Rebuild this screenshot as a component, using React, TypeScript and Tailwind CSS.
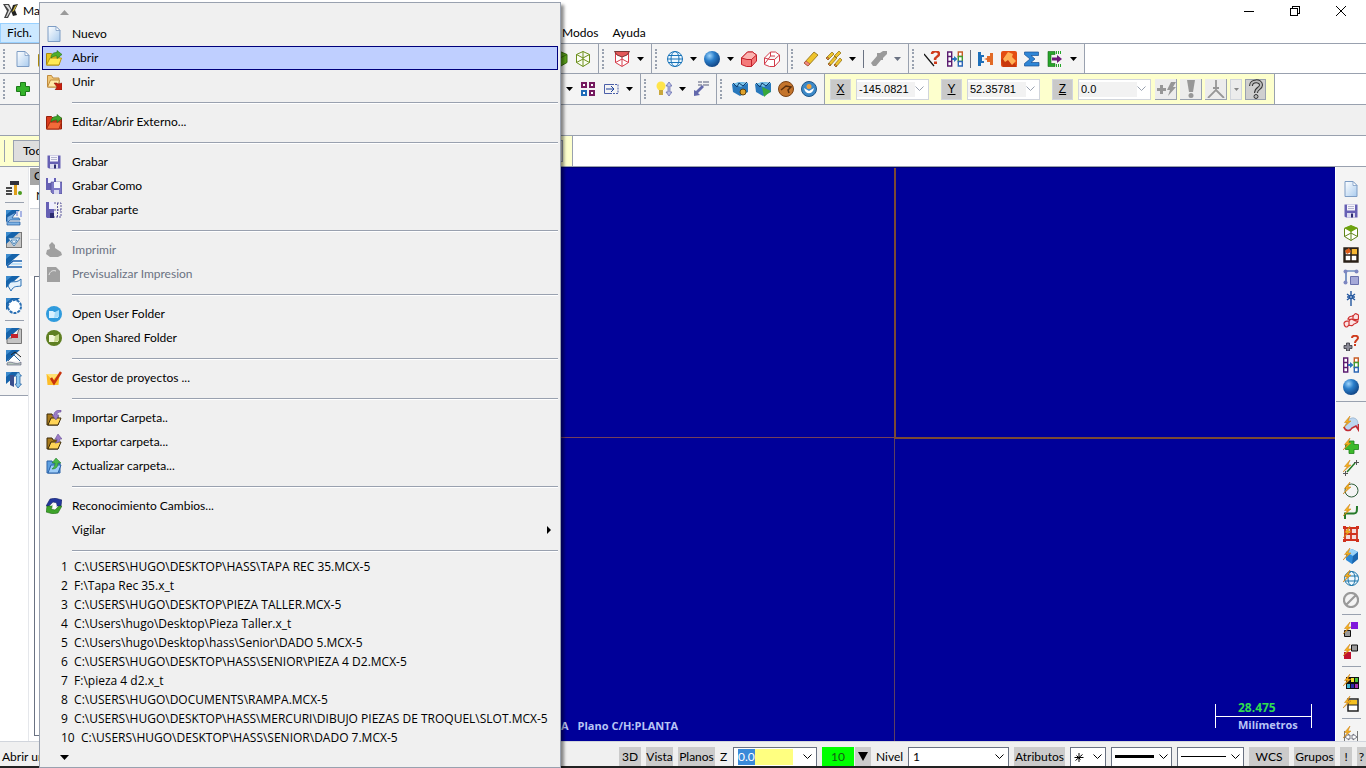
import React from "react";

type IconProps = { name: string; className?: string };

const bolt = <path d="M7 0 1.500 6.500h3L0 12l8-7H5z" fill="#f6b21b" stroke="#c97a10" strokeWidth=".5" />;
const corner = (
  <g>
    <path d="M0 0h14L0 12z" fill="#1563ab" />
    <path d="M0 0h6L0 5z" fill="#3d8bcd" />
  </g>
);

const icons: Record<string, React.ReactNode> = {
  doc: (
    <g>
      <path d="M2 .5h8l4 4v11H2z" fill="url(#page)" stroke="#7d9cc4" />
      <path d="M10 .5v4h4z" fill="#fff" stroke="#7d9cc4" strokeWidth=".8" />
    </g>
  ),
  open: (
    <g>
      <path d="M.5 15V3.500h5L7 5h6v10z" fill="#e8c51f" stroke="#a8870c" />
      <path d="M.5 15 4 8h11.500L13 15z" fill="#ffe955" stroke="#b8960f" />
      <path d="M5 8c0-4 2-5.500 6-5.500V.5l5 4-5 4V6C8 6 7 6.500 5 8z" fill="#4fae2a" stroke="#23701a" strokeWidth=".6" />
    </g>
  ),
  merge: (
    <g>
      <path d="M1.500 13V1.500h4L7 4h6v9z" fill="#f0c878" stroke="#c08a3c" />
      <path d="m1.500 13 3-7h9L12 13z" fill="#ffe9a8" stroke="#c08a3c" />
      <path d="M8 9h3l1 1 4-1v7H9l2-3z" fill="#c8200f" stroke="#7d150a" strokeWidth=".5" />
    </g>
  ),
  external: (
    <g>
      <path d="M.5 15V2.500h5L7 4h8.500v11z" fill="#d93a1c" stroke="#96200c" />
      <path d="M.5 15 4 8h11.500L13 15z" fill="#f26b3a" stroke="#a82b0e" />
      <path d="M5 8c0-4 2-5.500 6-5.500V.5l5 4-5 4V6C8 6 7 6.500 5 8z" fill="#3fa52a" stroke="#1f661a" strokeWidth=".6" />
    </g>
  ),
  save: (
    <g>
      <path d="M1.500 1.500h13v13H3l-1.500-1z" fill="#6660b4" />
      <path d="M4 1.500h8v6H4z" fill="#f4f4fb" />
      <path d="M5 3.500h6M5 5.500h6" stroke="#b6b6d0" />
      <path d="M4 10h8v4.500H4z" fill="#dcdcf0" />
      <path d="M8 10.500h2v4H8z" fill="#2c2c70" />
    </g>
  ),
  saveAs: (
    <g>
      <path d="M0 0h10v12H0z" fill="#6660b4" />
      <path d="M2 0h6v5H2z" fill="#eef" />
      <path d="M5 4h11v12H7l-2-2z" fill="#7d78c6" stroke="#4b468e" strokeWidth=".6" />
      <path d="M8 4h6v6H8z" fill="#f4f4fb" />
      <path d="M8 12h5v4H8z" fill="#dcdcf0" />
    </g>
  ),
  savePart: (
    <g>
      <path d="M0 0h8v16H1l-1-1z" fill="#6660b4" />
      <path d="M3 0h5v7H3z" fill="#eef" />
      <path d="M4 11h4v5H4z" fill="#2c2c70" />
      <path d="M8 1h7v14H8M8 8h7M11.500 1v14" fill="none" stroke="#5a569c" strokeDasharray="2 1" />
    </g>
  ),
  print: <path d="M4 7 3 3l3-3 3 3v3l6 4 1 3-4 2H4l-4-3 1-4z" fill="#a0a0a0" />,
  preview: (
    <g>
      <path d="M1 1h9l4 4v11H1z" fill="#a0a0a0" />
      <path d="M3 9c1-4 4-5 7-4" fill="none" stroke="#e8e8e8" />
    </g>
  ),
  userFolder: (
    <g>
      <circle cx="8" cy="8" r="8" fill="#2f9bdd" />
      <path d="M3 5h4l1 1h4v6H3z" fill="#d8f1ff" />
      <path d="m8 12 1-6 4-2v7z" fill="#a3dbfa" />
    </g>
  ),
  sharedFolder: (
    <g>
      <circle cx="8" cy="8" r="8" fill="#5f7f22" />
      <path d="M3 5h4l1 1h4v6H3z" fill="#f3f7da" />
      <path d="m8 12 1-6 4-2v7z" fill="#c5d68a" />
    </g>
  ),
  project: (
    <g>
      <path d="M.5 4h13l-1 11H1.500z" fill="#fdbd28" />
      <path d="M.5 4h13l-7 6z" fill="#ffe272" />
      <path d="m5 8 3 5 7-11" fill="none" stroke="#c8330d" strokeWidth="2.500" />
    </g>
  ),
  importDir: (
    <g>
      <path d="M1 15V4h5l1 2h5v9z" fill="#a87a1c" stroke="#3c2a08" />
      <path d="m2 15 3-7h10l-3 7z" fill="#ffd456" stroke="#3c2a08" />
      <path d="M15 0c-5 0-7 2-7 5H6l4 5 3-5h-2c0-2 1-3 4-3z" fill="#9b7cc6" stroke="#5c4590" strokeWidth=".5" />
    </g>
  ),
  exportDir: (
    <g>
      <path d="M1 15V4h5l1 2h5v9z" fill="#a87a1c" stroke="#3c2a08" />
      <path d="m2 15 3-7h10l-3 7z" fill="#ffd456" stroke="#3c2a08" />
      <path d="m12 0 4 5h-2c0 3-2 4-5 4 2-1 2-2 2-4H9z" fill="#9b7cc6" stroke="#5c4590" strokeWidth=".5" />
    </g>
  ),
  updateDir: (
    <g>
      <path d="M1 15V3h5l1 2h7v10z" fill="#5d9fe0" stroke="#2a62a8" />
      <path d="m2 15 3-8h10l-3 8z" fill="#9dccf8" stroke="#2a62a8" />
      <path d="m10 0 5 5h-3c0 4-2 6-6 6 2-2 3-3 3-6H6z" fill="#49b84a" stroke="#1f7526" strokeWidth=".5" />
    </g>
  ),
  changes: (
    <g>
      <path d="m0 8 4-7 5-1 7 2-1 6H9l2-3-4-1-4 4z" fill="#23379c" stroke="#101c5c" strokeWidth=".5" />
      <path d="m16 8-4 7-5 1-7-2 1-6h6l-2 3 4 1 4-4z" fill="#3ea32a" stroke="#195c12" strokeWidth=".5" />
      <path d="m6 9 3-4 2 2-2 4z" fill="#fff" />
    </g>
  ),
  plus: <path d="M5.500 1.500h5v4h4v5h-4v4h-5v-4h-4v-5h4z" fill="#34b32a" stroke="#1c7a19" />,
  cubeGreen: (
    <g>
      <path d="m8 .5 7 3v8l-7 4-7-4v-8z" fill="#5fa81e" stroke="#3a6d10" />
      <path d="M1 3.500 8 7l7-3.500M8 7v8.500" fill="none" stroke="#3a6d10" />
    </g>
  ),
  cubeWire: (
    <path d="m8 .5 6.500 3v8L8 15.500l-6.500-4v-8zM1.500 3.500 8 7l6.500-3.500M8 .5v15M1.500 11.500 8 8l6.500 3.500" fill="#fbfdf2" stroke="#6b8f1a" />
  ),
  cubeTop: (
    <g>
      <path d="m8 1 6.500 2.500v8L8 15.500l-6.500-4v-8zM1.500 11.500 8 8l6.500 3.500M8 6v9.500" fill="#fff" stroke="#5f8418" />
      <path d="m8 0 7 3-7 4-7-4z" fill="#6da30f" />
    </g>
  ),
  cubeRedTop: (
    <g>
      <path d="M1.500 2h13v9.500L8 15.500l-6.500-4zM1.500 11.500 8 8l6.500 3.500M8 6v9" fill="#fff" stroke="#d63a48" />
      <path d="M.5.5h15L13 4 8 6 3 4z" fill="#e35a5a" stroke="#5c1a1a" strokeWidth=".8" />
    </g>
  ),
  globe: (
    <g fill="none" stroke="#1873b8">
      <circle cx="8" cy="8" r="7.500" fill="#eef8ff" />
      <ellipse cx="8" cy="8" rx="4" ry="7.500" />
      <path d="M.5 8h15M2 4.500h12M2 11.500h12" />
    </g>
  ),
  sphere: <circle cx="8" cy="8" r="8" fill="url(#ball)" />,
  boxRed: (
    <g stroke="#c3202a">
      <path d="m.5 7 6-6h5l4 3v6l-5 5.500h-5l-5-2z" fill="#f47a7a" />
      <path d="m.5 7 6-6h5l4 3-5 4.500H6z" fill="#fcb3b0" />
      <path d="M10.500 8.500v7" fill="none" />
    </g>
  ),
  boxWire: <path d="m.5 7 6-6h5l4 3v6l-5 5.500h-5l-5-2zM.5 7 6 8.500h4.500l5-4.500M6.500 1v4l-6 8M6.500 5h4.500M10.500 8.500v7" fill="#fff" stroke="#d23c4a" />,
  eraser: (
    <g>
      <path d="m1 12 10-11 4 3L5 15z" fill="#efc42c" stroke="#8a6a10" strokeWidth=".8" />
      <path d="m1 12 2-2 4 3-2 2z" fill="#f08a84" stroke="#a34238" strokeWidth=".6" />
    </g>
  ),
  erasers: (
    <g fill="#efc42c" stroke="#8a6a10" strokeWidth=".7">
      <path d="m0 7 6-6 2 2-6 6zM2 13l7-8 2 2-7 8zM8 14l6-7 2 2-6 7zM8 5l5-5 2 2-5 5z" />
      <path d="m0 7 2-1 1 2-1 1zM2 13l1-1 2 2-1 1zM8 14l1-1 2 2-1 1z" fill="#ee7d75" />
    </g>
  ),
  eraserOff: <path d="m0 12 6-7V2h3l3-2h4v3l-4 4v2h-2l-5 6H2z" fill="#9a9a9a" />,
  analyze: (
    <g>
      <path d="m0 3 10 12" stroke="#111" strokeWidth="1.200" />
      <path d="M8 3c0-3 7-4 7 0 0 3-4 2-4 6" fill="none" stroke="#cf3b1c" strokeWidth="2.500" />
      <path d="M10 10.500h3v2.500h-3z" fill="#cf3b1c" />
    </g>
  ),
  swap: (
    <g fill="#fff" strokeWidth="1.400">
      <path d="M.7 1h4v14h-4zM.7 5.500h4M.7 10.500h4" stroke="#5b1c70" />
      <path d="M11.300 1h4v4.500h-4z" stroke="#c85c25" />
      <path d="M11.300 5.500h4v5h-4z" stroke="#459a30" />
      <path d="M11.300 10.500h4V15h-4z" stroke="#2b65b5" />
      <path d="M5 7h2V5l3.500 3L7 11V9H5z" fill="#2b75c0" />
    </g>
  ),
  plug: (
    <g>
      <path d="M0 1h3v3h3v2H4v4h2v2H3v3H0z" fill="#1d6fba" />
      <path d="M15 2h-3v3H9v2L6 8l3 1v2h3v3h3z" fill="#e26a26" />
    </g>
  ),
  feature: (
    <g>
      <rect width="16" height="16" rx="2" fill="#e44d12" />
      <path d="M0 9 7 2 16 16H2z" fill="#c8380c" />
      <path d="m7 1 5 2-1 3 4 4-4 4-4-5-3 2-2-3z" fill="#ffb055" />
    </g>
  ),
  sigma: <path d="M.5 1h14v3.500H7L11 8l-4 3.500h8V15H.5v-2.500L6 8 .5 3.500z" fill="#2f86d6" stroke="#174f92" strokeWidth=".7" />,
  outbox: (
    <g>
      <path d="M8 .5H1v15h7v-3H4v-9h4z" fill="#27a52a" stroke="#156416" strokeWidth=".6" />
      <path d="M5 6.500h5V4l5 4-5 4V9.500H5z" fill="#6c1878" />
      <path d="M9.500 0v3M11.500 0v3M13.500 0v3M9.500 13v3M11.500 13v3M13.500 13v3" stroke="#27a52a" />
    </g>
  ),
  squares: (
    <g fill="#fff" strokeWidth="2">
      <path d="M2 2h4v4H2zM10 2h4v4h-4zM10 10h4v4h-4z" stroke="#741a5f" />
      <path d="M2 10h4v4H2z" stroke="#1f6cb8" />
    </g>
  ),
  stretch: (
    <g fill="none" stroke="#4a5ea8">
      <path d="M9 3.500H1.500v9H9" />
      <path d="M9 3.500h6v9H9" strokeDasharray="2 1" />
      <path d="M3 8h7M8 5l3 3-3 3" stroke="#1b3f9c" />
    </g>
  ),
  bulb: (
    <g>
      <circle cx="5" cy="5" r="4.500" fill="#ffe44a" />
      <path d="M3 9h4v5H3z" fill="#c9a83c" />
      <path d="m13 1 3 4h-2v6h2l-3 4-3-4h2V5h-2z" fill="#b9bfe6" stroke="#5b63a8" strokeWidth=".7" />
    </g>
  ),
  axisText: (
    <g>
      <path d="M5 1h4M10 1h6M5 4h4M10 4h6" stroke="#555a78" />
      <path d="m11 6-6 6 2 2-6 1 0-6 2 1 6-6z" fill="#6268ac" />
    </g>
  ),
  mcGear: (
    <g>
      <path d="M0 3 8 1l8 1v9l-8 4-7-4z" fill="#2878bc" />
      <path d="M0 3 8 1l8 1-7 4z" fill="#79c3ea" />
      <path d="m1 2 4 4 2-4 4 3 4-4" stroke="#0f3a6c" fill="none" />
      <circle cx="11" cy="11" r="3" fill="#e0a32c" stroke="#5c4110" />
    </g>
  ),
  mcRun: (
    <g>
      <path d="M0 3 8 1l8 1v9l-8 4-7-4z" fill="#2878bc" />
      <path d="M0 3 8 1l8 1-7 4z" fill="#79c3ea" />
      <path d="m1 2 4 4 2-4 4 3 4-4" stroke="#0f3a6c" fill="none" />
      <path d="m7 6 9 4-7 6z" fill="#38a83a" />
    </g>
  ),
  brownBall: (
    <g>
      <circle cx="8" cy="8" r="7.500" fill="#c4742b" stroke="#7b4315" />
      <path d="m3 9 5-4 5 1-3 3 1 3" fill="none" stroke="#5a2f0d" strokeWidth="1.500" />
    </g>
  ),
  blueBall: (
    <g>
      <circle cx="8" cy="8" r="7.500" fill="#3b89c8" stroke="#1d5588" />
      <path d="M3 7c1 7 9 7 10 0l-5 3z" fill="#fff" />
      <circle cx="8" cy="5.500" r="2.500" fill="#f0a03c" />
    </g>
  ),
  hammer: (
    <g>
      <path d="M4 1h9v4H4z" fill="#30303c" />
      <path d="M8 5h3v10H8z" fill="#e0a01c" />
      <path d="M0 8h6M0 11h6M0 14h6" stroke="#111" strokeWidth="1.300" />
      <circle cx="14" cy="13" r="2" fill="#4a9a20" />
    </g>
  ),
  opContour: (
    <g>
      {corner}
      <path d="M10 1h2v5h-2zM14 1h2v6h-2z" fill="#a8b4e4" />
      <path d="m1 7 9-5-4 6h7l1 2H4l-2 2h12v3H1z" fill="#7fb4e6" stroke="#1b5399" strokeWidth=".7" />
    </g>
  ),
  opPocket: (
    <g>
      <rect x=".5" y=".5" width="15" height="15" fill="#c6c6c6" stroke="#777" />
      {corner}
      <path d="M2 6h12l-6 8zM5 8h6l-3 4z" fill="#e8f3fc" stroke="#2c6eaa" strokeWidth=".8" />
    </g>
  ),
  opFace: (
    <g>
      {corner}
      <path d="m6 7 4-3h6v5H5z" fill="#f4f8fc" />
      <path d="M1 12 7 7h9M1 13h15" stroke="#1b62ae" strokeWidth="1.600" fill="none" />
      <path d="M6 9h10v2H4z" fill="#bfe0f7" />
    </g>
  ),
  opSurf: (
    <g>
      {corner}
      <path d="M2 10c3-8 7-1 13-7v7c-4 1-7-1-10 5z" fill="#e4f1fb" stroke="#2b70b4" />
    </g>
  ),
  opCircle: (
    <g>
      {corner}
      <circle cx="8.500" cy="8.500" r="6.500" fill="#fff" stroke="#2b70b4" strokeWidth="2" strokeDasharray="3 1" />
    </g>
  ),
  opBlock: (
    <g>
      <path d="M1 10h5V7h5l2-6h2.500v14.500H1z" fill="#c4c4c4" stroke="#777" />
      {corner}
      <path d="M5 6h7v4H5z" fill="#c4232c" />
    </g>
  ),
  opMulti: (
    <g>
      {corner}
      <path d="m5 5 4-3 6 5" fill="none" stroke="#222" />
      <path d="m2 11 6-6 6 6" fill="#fff" stroke="#33689b" />
      <path d="M1 13c4-3 9 3 14-1v3H1z" fill="#b9c9bd" stroke="#557" strokeWidth=".6" />
    </g>
  ),
  opDrill: (
    <g>
      {corner}
      <path d="M4 3h4v12l-4-2z" fill="#394f8e" />
      <path d="m12 0 3.500 4H14v8h1.500L12 16l-3-4h1.500V4H9z" fill="#8cc6ee" stroke="#1b5c9f" strokeWidth=".7" />
    </g>
  ),
  gridBolt: (
    <g>
      <path d="M1.500 1.500h13v13h-13z" fill="#fff" stroke="#2a2118" strokeWidth="2.400" />
      <path d="M8 2h6v6H8z" fill="#f5b733" />
      <path d="M8 1v14M1 8h14" stroke="#2a2118" strokeWidth="1.500" />
      <path d="m2 4 4-3 2 4-4 2z" fill="#de5b15" />
    </g>
  ),
  nodes: (
    <g>
      <path d="M3 14V2h11" fill="none" stroke="#2d5aa6" strokeWidth="1.200" />
      <circle cx="2.500" cy="2.500" r="2" fill="#7c86c0" />
      <circle cx="13.500" cy="2.500" r="2" fill="#7c86c0" />
      <circle cx="2.500" cy="13.500" r="2" fill="#7c86c0" />
      <path d="M7.500 7.500h8v8h-8z" fill="#a5a9d8" stroke="#6a70ac" />
    </g>
  ),
  star: (
    <g fill="none" stroke="#23579f" strokeWidth="1.400">
      <path d="M8 0v15M4 3l8 6M12 3 4 9M4 6h8" />
      <circle cx="8" cy="6" r="1.500" fill="#fff" />
    </g>
  ),
  ribbon: (
    <g fill="#fbe3e3" stroke="#cf3030" strokeWidth="1.200">
      <path d="M5 6c2-5 4-1 6-4s3 0 4.500 0v4c-2 2-4-1-6 1z" />
      <path d="M1 10c2-4 4 0 6-3s4 2 8 1c0 3-4 2-5 4s-4-1-5 1-4 1-4-3z" />
      <path d="M6 8v4M10 2v5" fill="none" />
    </g>
  ),
  plusAsk: (
    <g>
      <path d="M3.500 8h3v2.500H9v3H6.500V16h-3v-2.500H1v-3h2.500z" fill="#8a8a96" stroke="#33333c" strokeWidth=".8" />
      <path d="M9 3c0-3 6-3 6 0 0 2-3 2-3 5" fill="none" stroke="#cf3b1c" strokeWidth="2" />
      <path d="M11 9h2v2h-2z" fill="#cf3b1c" />
    </g>
  ),
  boltSurf: (
    <g>
      <path d="M1 12c2-1 2-8 5-9s4-2 7 0c2 1 2 5 2.500 9l-3-2-3 1c-2 4-6 4-8.500 1z" fill="#bcd6f0" stroke="#8aa4c0" strokeWidth=".6" />
      <path d="M1 11c1 4 6 5 8 1l4-2 2.500 4V8" fill="none" stroke="#c22a34" strokeWidth="1.600" />
      {bolt}
    </g>
  ),
  boltPlus: (
    <g>
      <path d="M6 3h5v3.500h4.500v5H11v4H6v-4H2.500v-5H6z" fill="#3cba2a" stroke="#1f8019" strokeWidth=".8" />
      {bolt}
    </g>
  ),
  boltLine: (
    <g>
      <path d="m4 12 8-9" stroke="#237a26" strokeWidth="1.500" />
      <path d="M11 2.500h5M13.500 0v5M0 13.500h5M2.500 11v5" stroke="#555" />
      {bolt}
    </g>
  ),
  boltCircle: (
    <g>
      <circle cx="8.500" cy="8.500" r="6.500" fill="none" stroke="#2e5d38" />
      {bolt}
    </g>
  ),
  boltCurve: (
    <g>
      <path d="M2 15V9.500h9c3 0 3-2 3-7.500" fill="none" stroke="#257a2a" strokeWidth="2" />
      {bolt}
    </g>
  ),
  boltGrid: (
    <g>
      <path d="M2 2h12v12H2zM8 2v12M2 8h12" fill="#f3dcdc" stroke="#d0301d" strokeWidth="1.800" />
      <path d="M0 0h3v3H0zM13 0h3v3h-3zM0 13h3v3H0zM13 13h3v3h-3z" fill="#d0301d" />
      {bolt}
    </g>
  ),
  boltCube: (
    <g>
      <path d="m9 1 6 3v7l-6 5-6-4V4z" fill="#2f8bd8" />
      <path d="m9 1 6 3-5 4-7-4z" fill="#9ad2f7" />
      <path d="m10 8 5-4v7l-6 5z" fill="#1c66ae" />
      {bolt}
    </g>
  ),
  boltGlobe: (
    <g>
      <g fill="none" stroke="#1873a8">
        <circle cx="8.500" cy="8.500" r="7" fill="#eef8ff" />
        <ellipse cx="8.500" cy="8.500" rx="3.500" ry="7" />
        <path d="M2 6h13M2 11h13" />
      </g>
      {bolt}
    </g>
  ),
  none: <path d="M13 3A7 7 0 1 0 3 13 7 7 0 0 0 13 3L3 13" fill="none" stroke="#9a9a9a" strokeWidth="2.200" />,
  boltPurple: (
    <g>
      <path d="M8 0h7v7H8z" fill="#8118dc" />
      <path d="M1.500 8.500h6v6h-6z" fill="#9a9a9a" stroke="#111" />
      {bolt}
    </g>
  ),
  boltRed: (
    <g>
      <path d="M8.500 1h6v6h-6z" fill="#9a9a9a" stroke="#111" />
      <path d="M1 8h7v7H1z" fill="#c0102f" />
      {bolt}
    </g>
  ),
  boltColors: (
    <g>
      <path d="M3 3h13v12H3z" fill="#111" />
      <path d="M8 4h3v4H8z" fill="#f2e22c" />
      <path d="M12 4h3v4h-3z" fill="#4bc43a" />
      <path d="M4 10h3v4H4z" fill="#3fb7d4" />
      <path d="M8 10h3v4H8z" fill="#2c2ca8" />
      <path d="M12 10h3v4h-3z" fill="#a834b0" />
      {bolt}
    </g>
  ),
  boltBoard: (
    <g>
      <path d="M5 3h10v12H5z" fill="#fff" stroke="#222" strokeWidth="1.500" />
      <path d="M6 4h8v5H6z" fill="#f4c021" />
      <path d="M5 9h10" stroke="#222" />
      {bolt}
    </g>
  ),
  boltDim: (
    <g>
      <path d="M1.500 5v11M14.500 5v11" stroke="#777" />
      <path d="m2 11 4-3v2h4V8l4 3-4 3v-2H6v2z" fill="#fff" stroke="#556" strokeWidth=".8" />
      {bolt}
    </g>
  ),
};

const Icon = ({ name, className = "" }: IconProps) => (
  <svg viewBox="0 0 16 16" className={`size-4 shrink-0 ${className}`} aria-hidden="true">
    {icons[name]}
  </svg>
);

const Tool = ({ name }: { name: string }) => (
  <button type="button" aria-label={name} className="shrink-0">
    <Icon name={name} />
  </button>
);

const Arrow = ({ off = false }: { off?: boolean }) => (
  <svg viewBox="0 0 7 4" className={`h-1 w-[7px] shrink-0 ${off ? "text-gray-500" : "text-black"}`} aria-hidden="true">
    <path d="M0 0h7L3.500 4z" fill="currentColor" />
  </svg>
);

const Chevron = () => (
  <svg viewBox="0 0 9 6" className="pointer-events-none h-[6px] w-[9px] shrink-0" aria-hidden="true">
    <path d="m.5.5 4 4 4-4" fill="none" stroke="currentColor" />
  </svg>
);

const Grip = () => <span className="h-5 w-[5px] shrink-0 border-l-2 border-dotted border-gray-400" />;

const Divider = () => <span className="h-[18px] w-px shrink-0 bg-gray-500" />;

// "v" is a drop-down arrow, "-" an inactive one and "|" a divider
const Tools = ({ items }: { items: string[] }) => (
  <>
    {items.map((item, i) => {
      if (item === "v" || item === "-") return <Arrow key={i} off={item === "-"} />;
      if (item === "|") return <Divider key={i} />;
      return <Tool key={i} name={item} />;
    })}
  </>
);

const Group = ({ items }: { items: string[] }) => (
  <div className="flex shrink-0 items-center gap-[7px] border-r border-gray-400 bg-[#f4f4f4] pr-[7px] pl-[3px]">
    <Grip />
    <Tools items={items} />
  </div>
);

const LeadGroup = ({ first, last, width }: { first: string[]; last: string[]; width: string }) => (
  <div className={`flex shrink-0 items-center gap-[7px] border-r border-gray-400 bg-[#f4f4f4] pr-[7px] pl-[3px] ${width}`}>
    <Grip />
    <Tools items={first} />
    <span className="flex-1" />
    <Tools items={last} />
  </div>
);

const Coordinate = ({ axis, value }: { axis: string; value: string }) => (
  <div className="flex shrink-0 items-center gap-[5px] font-['Liberation_Sans',sans-serif]">
    <label htmlFor={`axis-${axis}`} className="flex h-[21px] w-[21px] items-center justify-center border border-gray-300 bg-[#c9c9c9] text-xs underline">
      {axis}
    </label>
    <div className="flex h-[21px] w-[73px] items-center border border-gray-300 bg-white pr-1 text-gray-400">
      <input id={`axis-${axis}`} defaultValue={value} className="h-[15px] w-full min-w-0 bg-[#f2f2f2] pl-[2px] text-[11px] text-black" />
      <Chevron />
    </div>
  </div>
);

type Entry = { label: string; icon?: string; active?: boolean; disabled?: boolean; sub?: boolean };

const fileMenu: Entry[][] = [
  [{ label: "Nuevo", icon: "doc" }, { label: "Abrir", icon: "open", active: true }, { label: "Unir", icon: "merge" }],
  [{ label: "Editar/Abrir Externo...", icon: "external" }],
  [{ label: "Grabar", icon: "save" }, { label: "Grabar Como", icon: "saveAs" }, { label: "Grabar parte", icon: "savePart" }],
  [{ label: "Imprimir", icon: "print", disabled: true }, { label: "Previsualizar Impresion", icon: "preview", disabled: true }],
  [{ label: "Open User Folder", icon: "userFolder" }, { label: "Open Shared Folder", icon: "sharedFolder" }],
  [{ label: "Gestor de proyectos ...", icon: "project" }],
  [
    { label: "Importar Carpeta..", icon: "importDir" },
    { label: "Exportar carpeta...", icon: "exportDir" },
    { label: "Actualizar carpeta...", icon: "updateDir" },
  ],
  [{ label: "Reconocimiento Cambios...", icon: "changes" }, { label: "Vigilar", sub: true }],
];

const recentFiles = [
  "C:\\USERS\\HUGO\\DESKTOP\\HASS\\TAPA REC 35.MCX-5",
  "F:\\Tapa Rec 35.x_t",
  "C:\\USERS\\HUGO\\DESKTOP\\PIEZA TALLER.MCX-5",
  "C:\\Users\\hugo\\Desktop\\Pieza Taller.x_t",
  "C:\\Users\\hugo\\Desktop\\hass\\Senior\\DADO 5.MCX-5",
  "C:\\USERS\\HUGO\\DESKTOP\\HASS\\SENIOR\\PIEZA 4 D2.MCX-5",
  "F:\\pieza 4 d2.x_t",
  "C:\\USERS\\HUGO\\DOCUMENTS\\RAMPA.MCX-5",
  "C:\\USERS\\HUGO\\DESKTOP\\HASS\\MERCURI\\DIBUJO PIEZAS DE TROQUEL\\SLOT.MCX-5",
  "C:\\USERS\\HUGO\\DESKTOP\\HASS\\SENIOR\\DADO 7.MCX-5",
];

const FileMenu = () => (
  <div className="absolute top-[2px] bottom-0 left-[39px] z-10 w-[522px] border border-gray-400 bg-[#f0f0f0] px-[2px] shadow-[3px_3px_3px_rgba(0,0,0,0.45)]">
    <div className="flex h-[19px] items-center pl-[18px]">
      <svg viewBox="0 0 9 5" className="h-[5px] w-[9px]" aria-hidden="true">
        <path d="M0 5h9L4.500 0z" fill="#9a9a9a" />
      </svg>
    </div>
    {fileMenu.map((section) => (
      <div key={section[0].label}>
        {section.map((entry) => (
          <button
            key={entry.label}
            type="button"
            disabled={entry.disabled}
            className={`flex h-6 w-full items-center border pl-[3px] text-left ${
              entry.active ? "border-[#00007c] bg-[#bfcfff]" : "border-transparent"
            } ${entry.disabled ? "text-gray-500" : ""}`}
          >
            {entry.icon ? <Icon name={entry.icon} /> : <span className="w-4" />}
            <span className="ml-[10px] flex-1">{entry.label}</span>
            {entry.sub && (
              <svg viewBox="0 0 4 8" className="mr-[6px] h-2 w-1" aria-hidden="true">
                <path d="M0 0v8l4-4z" fill="#000" />
              </svg>
            )}
          </button>
        ))}
        <div className="h-4 pt-2 pl-[30px]">
          <div className="h-[2px] border-t border-gray-400 bg-white" />
        </div>
      </div>
    ))}
    <div className="-mt-px font-['Open_Sans','Noto_Sans',sans-serif]">
      {recentFiles.map((file, i) => (
        <button key={file} type="button" className="block h-[19px] w-full pl-[19px] text-left leading-4 whitespace-pre">
          {`${i + 1}  ${file}`}
        </button>
      ))}
    </div>
    <div className="flex h-5 items-center pl-[18px]">
      <svg viewBox="0 0 9 5" className="h-[5px] w-[9px]" aria-hidden="true">
        <path d="M0 0h9L4.500 5z" fill="#000" />
      </svg>
    </div>
  </div>
);

const SideTools = ({ items }: { items: string[] }) => (
  <>
    {items.map((item, i) =>
      item === "|" ? (
        <span key={i} className="mb-px h-px w-[19px] shrink-0 bg-gray-400" />
      ) : (
        <Tool key={i} name={item} />
      )
    )}
  </>
);

const StatusButton = ({ children, className = "" }: { children: React.ReactNode; className?: string }) => (
  <button type="button" className={`h-[19px] shrink-0 bg-[#cbcbcb] text-center ${className}`}>
    {children}
  </button>
);

const StyleSelect = ({ label, width, children }: { label: string; width: string; children: React.ReactNode }) => (
  <div className={`relative flex h-5 shrink-0 items-center justify-between border border-gray-500 bg-white px-[3px] ${width}`}>
    <select aria-label={label} className="absolute inset-0 appearance-none" />
    <span className="pointer-events-none relative">{children}</span>
    <Chevron />
  </div>
);

const App = () => {
  return (
    <div className="relative flex h-screen flex-col overflow-hidden bg-white font-['Lato','Open_Sans',sans-serif] text-xs text-black select-none">
      <svg className="absolute size-0" aria-hidden="true">
        <defs>
          <linearGradient id="page" x1="0" y1="0" x2="1" y2="1">
            <stop offset="0" stopColor="#fff" />
            <stop offset="1" stopColor="#a9cbee" />
          </linearGradient>
          <radialGradient id="ball" cx=".35" cy=".3" r=".8">
            <stop offset="0" stopColor="#9ed4fb" />
            <stop offset=".4" stopColor="#2b7fcb" />
            <stop offset="1" stopColor="#0b3a78" />
          </radialGradient>
        </defs>
      </svg>

      <header className="flex h-[22px] shrink-0 items-center">
        <svg viewBox="0 0 16 16" className="ml-[3px] size-4" aria-hidden="true">
          <path d="M0 1h6l3 6-4 8H1l3-7z" fill="#444" />
          <path d="M2 2h3l3 5-4 7H3l3-7z" fill="#ddd" />
          <path d="m10 2 5-1-3 6 2 5-4 1-2-5z" fill="#222" />
          <path d="m9 9 3-6 2-1-3 6z" fill="#c9b43e" />
        </svg>
        <h1 className="ml-1 flex-1">Mastercam</h1>
        <div className="flex h-full pr-[2px]">
          <button type="button" aria-label="Minimizar" className="flex w-[46px] items-center justify-center">
            <span className="h-px w-[10px] bg-black" />
          </button>
          <button type="button" aria-label="Restaurar" className="flex w-[46px] items-center justify-center">
            <svg viewBox="0 0 10 10" className="size-[10px]" shapeRendering="crispEdges" aria-hidden="true">
              <path d="M.5 2.500h7v7h-7zM2.500 2.500v-2h7v7h-2" fill="none" stroke="#000" />
            </svg>
          </button>
          <button type="button" aria-label="Cerrar" className="flex w-[46px] items-center justify-center">
            <svg viewBox="0 0 10 10" className="size-[10px]" aria-hidden="true">
              <path d="m0 0 10 10M10 0 0 10" fill="none" stroke="#000" />
            </svg>
          </button>
        </div>
      </header>

      <nav className="flex h-[22px] shrink-0 items-center border-b border-gray-400">
        <div className="h-5 w-[562px]">
          <button type="button" className="h-5 w-[40px] border border-[#99d1ff] bg-[#cce8ff] pl-[6px] text-left">Fich.</button>
        </div>
        <div className="flex gap-[14px]">
          <button type="button">Modos</button>
          <button type="button">Ayuda</button>
        </div>
      </nav>

      <div className="flex h-[30px] shrink-0 border-b border-gray-400">
        <LeadGroup width="w-[599px]" first={["doc", "open"]} last={["cubeGreen", "cubeWire"]} />
        <Group items={["cubeRedTop", "v"]} />
        <Group items={["globe", "v", "sphere", "v", "boxRed", "boxWire"]} />
        <Group items={["eraser", "erasers", "v", "|", "eraserOff", "-"]} />
        <Group items={["analyze", "swap", "|", "plug", "feature", "sigma", "outbox", "v"]} />
      </div>

      <div className="flex h-[31px] shrink-0 border-b border-gray-400">
        <LeadGroup width="w-[641px]" first={["plus"]} last={["v", "squares", "stretch", "v"]} />
        <Group items={["bulb", "v", "axisText"]} />
        <Group items={["mcGear", "mcRun", "brownBall", "blueBall"]} />
        <div className="flex items-center border-r border-gray-400 bg-[#fdffcd] pr-2 pl-[5px]">
          <div className="flex gap-3">
            <Coordinate axis="X" value="-145.0821" />
            <Coordinate axis="Y" value="52.35781" />
            <Coordinate axis="Z" value="0.0" />
          </div>
          <div className="ml-1 flex gap-[3px]">
            <button type="button" aria-label="Punto rapido" className="flex h-[21px] w-[22px] items-center justify-center border-r border-b border-gray-400 bg-[#ececec]">
              <svg viewBox="0 0 20 16" className="h-4 w-5" aria-hidden="true">
                <path d="M4 4h3v3h3v3H7v3H4v-3H1V7h3zM15 1h5l-3 5h3l-8 9 2-6h-3z" fill="#979797" />
              </svg>
            </button>
            <button type="button" aria-label="Aviso" className="flex h-[21px] w-[22px] items-center justify-center border-r border-b border-gray-400 bg-[#ececec]">
              <svg viewBox="0 0 8 18" className="h-[18px] w-2" aria-hidden="true">
                <path d="M0 0h8L6 12H2z" fill="#979797" />
                <circle cx="4" cy="15.500" r="2.500" fill="#979797" />
              </svg>
            </button>
            <button type="button" aria-label="Ejes" className="flex h-[21px] w-[22px] items-center justify-center border-r border-b border-gray-400 bg-[#ececec]">
              <svg viewBox="0 0 18 18" className="size-[18px]" aria-hidden="true">
                <path d="M9 0v10L1 18M9 10l8 8M6 8h6" fill="none" stroke="#979797" strokeWidth="1.800" />
              </svg>
            </button>
            <button type="button" aria-label="Mas ejes" className="flex h-[21px] w-3 items-center justify-center border border-gray-300 bg-[#ececec]">
              <svg viewBox="0 0 5 3" className="h-[3px] w-[5px]" aria-hidden="true">
                <path d="M0 0h5L2.500 3z" fill="#888" />
              </svg>
            </button>
            <button type="button" aria-label="Ayuda" className="flex h-[21px] w-[21px] items-center justify-center border border-gray-400 bg-[#cfcfcf]">
              <svg viewBox="0 0 16 20" className="h-5 w-4" aria-hidden="true">
                <path d="M3 7c0-6 10-6 10-1 0 4-5 3-5 8" fill="none" stroke="#333" strokeWidth="4" />
                <path d="M3 7c0-6 10-6 10-1 0 4-5 3-5 8" fill="none" stroke="#bbb" strokeWidth="2" />
                <circle cx="8" cy="17.500" r="2" fill="#bbb" stroke="#333" />
              </svg>
            </button>
          </div>
        </div>
      </div>

      <div className="h-[31px] shrink-0 border-b border-gray-400 bg-[#f0f0f0]" />

      <div className="flex h-[31px] shrink-0 border-b border-gray-400">
        <div className="flex w-[573px] items-center border-r border-gray-400 bg-[#fdffcd] pr-[9px] pl-1">
          <span className="h-[22px] w-px bg-gray-400" />
          <button type="button" className="ml-2 h-[22px] flex-1 border border-gray-400 bg-[#dedede] pl-[9px] text-left">Todo</button>
        </div>
      </div>

      <main className="flex min-h-0 flex-1">
        <aside className="w-[29px] shrink-0 border-r border-gray-200">
          <div className="flex h-[229px] flex-col items-center gap-[6px] border-b border-gray-400 bg-[#f4f4f4] pt-[13px]">
            <SideTools items={["hammer", "|", "opContour", "opPocket", "opFace", "opSurf", "opCircle", "|", "opBlock", "opMulti", "opDrill"]} />
          </div>
        </aside>

        <section className="flex w-[231px] shrink-0 flex-col pl-px">
          <h2 className="mt-px h-[17px] bg-[#a6a6a6] pl-1 leading-4">G</h2>
          <div className="h-6 border-b border-gray-300 pl-[6px] leading-[22px]">N</div>
          <div className="h-[31px] border-b border-gray-300 bg-[#f6f6f6]" />
          <div className="h-9 bg-[#f6f6f6]" />
          <div className="mb-[5px] ml-1 flex-1 border border-gray-500" />
        </section>

        <section className="relative flex-1 overflow-hidden border-t border-[#000070] bg-[#000099] font-['Open_Sans','Noto_Sans',sans-serif] text-[11px] font-bold text-[#b9c4f5]">
          <span className="absolute inset-y-0 left-[59%] w-px bg-[#5c3f62]" />
          <span className="absolute inset-x-0 top-[47%] h-px bg-[#75405a]" />
          <span className="absolute top-0 left-[59%] h-[47%] w-[2px] bg-[#7c4a33]" />
          <span className="absolute top-[47%] right-0 left-[59%] h-[2px] bg-[#7c4a33]" />
          <p className="absolute bottom-[7px] left-[301px] flex gap-[9px]">
            <span>A</span>
            <span>Plano C/H:PLANTA</span>
          </p>
          <div className="absolute right-[23px] bottom-[9px] w-[97px] leading-[15px]">
            <div className="pl-[23px] text-xs text-[#2fdc50]">28.475</div>
            <div className="relative h-px bg-white">
              <span className="absolute -top-3 left-0 h-6 w-px bg-white" />
              <span className="absolute -top-3 right-0 h-6 w-px bg-white" />
            </div>
            <div className="pl-[23px]">Milímetros</div>
          </div>
        </section>

        <aside className="flex w-[31px] shrink-0 flex-col overflow-hidden border-l border-white bg-[#f4f4f4]">
          <div className="flex h-[235px] shrink-0 flex-col items-center gap-[6px] border-b border-gray-400 pt-[14px]">
            <SideTools items={["doc", "save", "cubeTop", "gridBolt", "nodes", "star", "ribbon", "plusAsk", "swap", "sphere"]} />
          </div>
          <div className="flex flex-col items-center gap-[6px] pt-[14px]">
            <SideTools
              items={[
                "boltSurf", "boltPlus", "boltLine", "boltCircle", "boltCurve", "boltGrid", "boltCube", "boltGlobe", "none",
                "|", "boltPurple", "boltRed", "|", "boltColors", "boltBoard", "|", "boltDim",
              ]}
            />
          </div>
        </aside>
      </main>

      <footer className="flex h-[27px] shrink-0 items-center gap-[5px] overflow-hidden border-t border-b-2 border-t-gray-300 border-b-[#222] bg-[#f0f0f0] pt-[5px]">
        <span className="flex-1 pl-[2px] whitespace-nowrap">Abrir un archivo</span>
        <StatusButton className="w-[22px]">3D</StatusButton>
        <StatusButton className="w-[27px]">Vista</StatusButton>
        <StatusButton className="w-[37px]">Planos</StatusButton>
        <div className="flex shrink-0 items-center">
          <label htmlFor="depth" className="w-[13px]">Z</label>
          <div className="flex h-5 w-[84px] items-center border border-gray-500 bg-white pr-1 pl-1">
            <span className="flex h-4 flex-1 items-center bg-[#ffff80]">
              <input id="depth" defaultValue="0.0" className="h-4 w-[17px] bg-[#3a8ad8] text-white" />
            </span>
            <span className="w-[10px]" />
            <Chevron />
          </div>
        </div>
        <div className="flex shrink-0 gap-px">
          <button type="button" className="h-[19px] w-8 bg-[#00ff00] text-[#145a14]">10</button>
          <button type="button" aria-label="Color" className="flex h-[19px] w-4 items-center justify-center bg-[#cbcbcb]">
            <svg viewBox="0 0 10 9" className="h-[9px] w-[10px]" aria-hidden="true">
              <path d="M0 0h10L5 9z" fill="#000" />
            </svg>
          </button>
        </div>
        <div className="flex shrink-0 items-center">
          <label htmlFor="level" className="w-8">Nivel</label>
          <div className="flex h-5 w-[101px] items-center border border-gray-500 bg-white pr-1">
            <input id="level" defaultValue="1" className="w-full min-w-0 pl-1" />
            <Chevron />
          </div>
        </div>
        <StatusButton className="w-[51px]">Atributos</StatusButton>
        <StyleSelect label="Estilo de punto" width="w-[36px]">
          <svg viewBox="0 0 10 10" className="size-[10px]" aria-hidden="true">
            <path d="M5 1v9M.5 5.500h9M1.500 8.500l7-6M2.500 3.500l4 4" stroke="#000" fill="none" />
          </svg>
        </StyleSelect>
        <StyleSelect label="Grosor de linea" width="w-[61px]">
          <span className="block h-[3px] w-[39px] bg-black" />
        </StyleSelect>
        <StyleSelect label="Estilo de linea" width="w-[67px]">
          <span className="block h-px w-[45px] bg-black" />
        </StyleSelect>
        <StatusButton className="w-[40px]">WCS</StatusButton>
        <StatusButton className="w-[41px]">Grupos</StatusButton>
        <StatusButton className="w-3">!</StatusButton>
        <StatusButton className="w-[9px]">?</StatusButton>
      </footer>

      <FileMenu />
    </div>
  );
};

export default App;
